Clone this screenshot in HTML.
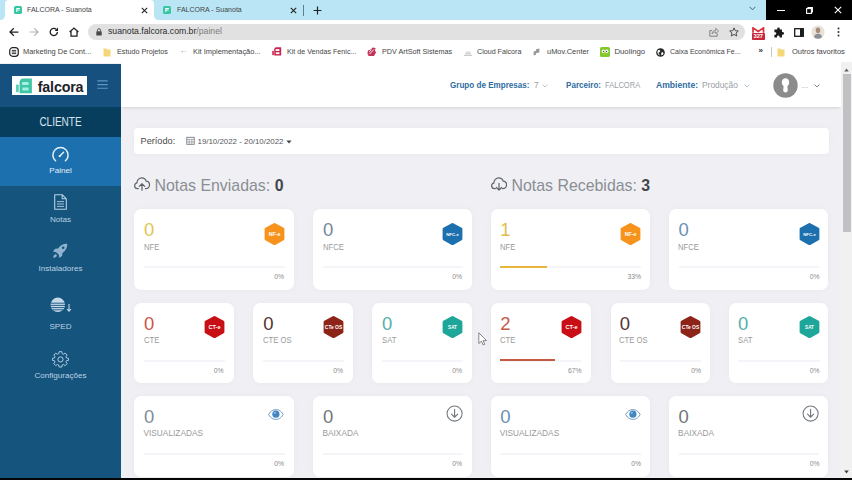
<!DOCTYPE html>
<html lang="pt-BR">
<head>
<meta charset="utf-8">
<title>FALCORA - Suanota</title>
<style>
*{box-sizing:border-box;margin:0;padding:0}
html,body{width:852px;height:480px;overflow:hidden;background:#fff;font-family:"Liberation Sans",sans-serif;}
.abs,.abs *{position:absolute}
#root{position:relative;width:852px;height:480px;overflow:hidden;background:#fff}
.t{position:absolute;white-space:nowrap;line-height:1}
/* browser chrome */
#tabbar{left:0;top:0;width:852px;height:20px;background:#b9e5f5}
#tab1{left:5px;top:0;width:148.5px;height:20px;background:#fff;border-radius:4px 4px 0 0}
#winctl{left:766px;top:0;width:86px;height:20px;background:#000}
#toolbar{left:0;top:20px;width:852px;height:23px;background:#fff}
#omni{left:87.5px;top:23.5px;width:657px;height:16.8px;border-radius:8.4px;background:#e1e1e1}
#bm{left:0;top:43px;width:852px;height:19px;background:#fff}
.bmt{font-size:7.6px;color:#3a3a3a;top:48px}
/* page */
#page{left:0;top:63px;width:852px;height:417px;background:#f0f0f4}
#side{left:0;top:63.5px;width:121px;height:417px;background:#14547d}
#sidehead{left:0;top:63.5px;width:121px;height:43.5px;background:#16507f}
#cliente{left:0;top:107px;width:121px;height:29.7px;background:#083e5d}
#active{left:0;top:136.7px;width:121px;height:49.3px;background:#1b70ad}
#hdr{left:121px;top:62px;width:720px;height:44.7px;background:#fff;box-shadow:0 2px 3px -1px rgba(0,0,0,.13)}
#scroll{left:841px;top:62px;width:11px;height:416px;background:#f1f1f1}
#thumb{left:842.7px;top:74px;width:8px;height:157.6px;background:#c1c0c2}
#bottom{left:0;top:478.4px;width:852px;height:1.6px;background:#050505}
.card{position:absolute;background:#fff;border-radius:7px;box-shadow:0 0 5px rgba(170,175,195,.12)}
.num{font-size:18.5px}
.lbl{font-size:8.3px;color:#9a9a9a}
.pct{font-size:6.8px;color:#8a8a8a}
.bar{position:absolute;height:2px;background:#f4f5f8;margin-top:-0.2px}
.hx{position:absolute}
.mi{font-size:8.1px;color:#bcd2e4;text-align:center;width:121px;left:0}
.hb{font-size:8.6px;font-weight:bold;color:#2f6c9f;top:81px}
.hv{font-size:8.4px;color:#9aa0a6;top:81.3px}
.ct{font-size:7.8px;color:#454545;transform-origin:0 50%}
.fav{position:absolute}
</style>
</head>
<body>
<div id="root" class="abs">
<!-- ===== browser chrome ===== -->
<div id="tabbar"></div>
<div id="tab1"></div>
<svg style="position:absolute;left:0;top:15px" width="5" height="5" viewBox="0 0 5 5"><path d="M0 5H5V0C5 3 3 5 0 5Z" fill="#fff"/></svg>
<svg style="position:absolute;left:153.5px;top:15px" width="5" height="5" viewBox="0 0 5 5"><path d="M5 5H0V0C0 3 2 5 5 5Z" fill="#fff"/></svg>
<div id="winctl"></div>
<div id="toolbar"></div>
<div id="omni"></div>
<div id="bm"></div>
<!-- CHROME-CONTENT -->
<!-- tab 1 -->
<svg class="fav" style="left:14px;top:5.8px" width="8" height="8" viewBox="0 0 8 8"><rect x="0" y="0" width="8" height="8" rx="1.6" fill="#35c7a2"/><path d="M2.3 2H6V3H3.3V3.6H5.6V4.5H3.3V6H2.3Z" fill="#fff"/></svg>
<div class="t ct" style="left:27.3px;top:5.7px;transform:scaleX(.9)">FALCORA - Suanota</div>
<svg class="fav" style="left:140.8px;top:6.6px" width="7" height="7" viewBox="0 0 7 7"><path d="M0.8 0.8L6.2 6.2M6.2 0.8L0.8 6.2" stroke="#222" stroke-width="1.1"/></svg>
<!-- tab 2 -->
<svg class="fav" style="left:162.5px;top:5.8px" width="8" height="8" viewBox="0 0 8 8"><rect x="0" y="0" width="8" height="8" rx="1.6" fill="#35c7a2"/><path d="M2.3 2H6V3H3.3V3.6H5.6V4.5H3.3V6H2.3Z" fill="#fff"/></svg>
<div class="t ct" style="left:176.5px;top:5.7px;transform:scaleX(.9)">FALCORA - Suanota</div>
<svg class="fav" style="left:290px;top:6.6px" width="7" height="7" viewBox="0 0 7 7"><path d="M0.8 0.8L6.2 6.2M6.2 0.8L0.8 6.2" stroke="#222" stroke-width="1.1"/></svg>
<div style="left:303px;top:4.5px;width:1px;height:11px;background:#5d7f8c"></div>
<svg class="fav" style="left:313px;top:5.5px" width="9" height="9" viewBox="0 0 9 9"><path d="M4.5 0.6V8.4M0.6 4.5H8.4" stroke="#222" stroke-width="1.2"/></svg>
<svg class="fav" style="left:748.5px;top:6px" width="7" height="5" viewBox="0 0 7 5"><path d="M0.6 0.8L3.5 3.8L6.4 0.8" fill="none" stroke="#456a78" stroke-width="1"/></svg>
<!-- window controls -->
<div style="left:777px;top:10px;width:7.5px;height:1.2px;background:#fff"></div>
<svg class="fav" style="left:805.5px;top:6.5px" width="7" height="7" viewBox="0 0 7 7"><rect x="0.6" y="1.6" width="4.8" height="4.8" fill="none" stroke="#fff" stroke-width="1.1"/><path d="M2 1.4V0.6H6.4V5H5.6" fill="none" stroke="#fff" stroke-width="1.1"/></svg>
<svg class="fav" style="left:834px;top:6.4px" width="8" height="8" viewBox="0 0 8 8"><path d="M0.8 0.8L7.2 7.2M7.2 0.8L0.8 7.2" stroke="#fff" stroke-width="1.1"/></svg>
<!-- toolbar -->
<svg class="fav" style="left:8.5px;top:26.5px" width="10" height="10" viewBox="0 0 10 10"><path d="M9.4 5H1.2M4.8 1.2L1 5L4.8 8.8" fill="none" stroke="#1f1f1f" stroke-width="1.25"/></svg>
<svg class="fav" style="left:29px;top:26.5px" width="10" height="10" viewBox="0 0 10 10"><path d="M0.6 5H8.8M5.2 1.2L9 5L5.2 8.8" fill="none" stroke="#b4b4b4" stroke-width="1.2"/></svg>
<svg class="fav" style="left:48.5px;top:26.5px" width="10" height="10" viewBox="0 0 10 10"><path d="M8.4 5A3.6 3.6 0 1 1 7.3 2.4" fill="none" stroke="#1f1f1f" stroke-width="1.3"/><path d="M9 0.6V3.9H5.7Z" fill="#1f1f1f"/></svg>
<svg class="fav" style="left:68.5px;top:26.5px" width="10" height="10" viewBox="0 0 10 10"><path d="M0.6 5L5 1L9.4 5M2 4.2V9H8V4.2" fill="none" stroke="#1f1f1f" stroke-width="1.25"/></svg>
<svg class="fav" style="left:95.5px;top:27.8px" width="6" height="8" viewBox="0 0 6 8"><rect x="0.3" y="3.2" width="5.4" height="4.4" rx="0.6" fill="#4a4a4a"/><path d="M1.5 3.4V2.2A1.5 1.5 0 0 1 4.5 2.2V3.4" fill="none" stroke="#4a4a4a" stroke-width="0.9"/></svg>
<div class="t" style="left:108px;top:27.4px;font-size:9px;color:#2a2a2a;transform-origin:0 50%;transform:scaleX(.965)">suanota.falcora.com.br<span style="position:static;color:#7d7d7d">/painel</span></div>
<svg class="fav" style="left:708.5px;top:27px" width="10" height="10" viewBox="0 0 10 10"><path d="M3.2 3.6H0.8V9.2H8.2V6.6" fill="none" stroke="#777" stroke-width="0.9"/><path d="M3 7C3.2 4.8 4.6 3.4 6.8 3.2V1.4L9.6 4L6.8 6.6V4.9C5.2 5 4 5.6 3 7Z" fill="none" stroke="#777" stroke-width="0.8" stroke-linejoin="round"/></svg>
<svg class="fav" style="left:728.5px;top:26.8px" width="10" height="10" viewBox="0 0 10 10"><path d="M5 0.9L6.25 3.7L9.3 4L7 6L7.7 9L5 7.4L2.3 9L3 6L0.7 4L3.75 3.7Z" fill="none" stroke="#444" stroke-width="0.95" stroke-linejoin="round"/></svg>
<!-- extensions -->
<svg class="fav" style="left:752px;top:27.3px" width="12.5" height="6" viewBox="0 0 12.5 6"><path d="M1 5.8V0.9L6.25 4.4L11.5 0.9V5.8" fill="none" stroke="#d8303d" stroke-width="1.7" stroke-linejoin="miter"/></svg>
<div style="left:752px;top:33.2px;width:12.5px;height:6.6px;background:#c8283a;border-radius:0.8px"></div>
<div class="t" style="left:752px;top:33.7px;width:12.5px;text-align:center;font-size:5.8px;font-weight:bold;color:#fff">327</div>
<svg class="fav" style="left:772.5px;top:26.5px" width="11" height="11" viewBox="0 0 11 11"><path d="M4.2 1.8A1.3 1.3 0 0 1 6.8 1.8V2.6H9V5H9.6A1.4 1.4 0 0 1 9.6 7.8H9V10.4H6.6V9.8A1.3 1.3 0 0 0 4 9.8V10.4H1.4V7.8H2A1.3 1.3 0 0 0 2 5.2H1.4V2.6H4.2Z" fill="#1c1c1c"/></svg>
<svg class="fav" style="left:793.5px;top:27.5px" width="10" height="9" viewBox="0 0 10 9"><rect x="0.7" y="0.7" width="8.6" height="7.6" fill="none" stroke="#1c1c1c" stroke-width="1.3"/><rect x="6" y="0.7" width="3.3" height="7.6" fill="#1c1c1c"/></svg>
<svg class="fav" style="left:811px;top:25px" width="14" height="14" viewBox="0 0 14 14"><circle cx="7" cy="7" r="6.6" fill="#e9e2d9"/><path d="M7 2.6C5.4 2.6 4.6 3.9 4.7 5.4C4.8 6.9 5.6 8.2 7 8.2C8.4 8.2 9.2 6.9 9.3 5.4C9.4 3.9 8.6 2.6 7 2.6Z" fill="#a58f7c"/><path d="M3 12.2C3.4 9.8 5 8.8 7 8.8C9 8.8 10.6 9.8 11 12.2A6.6 6.6 0 0 1 3 12.2Z" fill="#8b8e94"/></svg>
<svg class="fav" style="left:836.5px;top:27px" width="3" height="10" viewBox="0 0 3 10"><circle cx="1.5" cy="1.5" r="1" fill="#333"/><circle cx="1.5" cy="5" r="1" fill="#333"/><circle cx="1.5" cy="8.5" r="1" fill="#333"/></svg>
<!-- bookmarks -->
<svg class="fav" style="left:8.5px;top:47px" width="10" height="10" viewBox="0 0 10 10"><rect x="0.7" y="0.7" width="8.6" height="8.6" rx="3" fill="none" stroke="#222" stroke-width="1.2"/><path d="M2.8 3.4H7.2M2.8 5H7.2M2.8 6.6H7.2" stroke="#222" stroke-width="0.9"/></svg>
<div class="t ct" style="left:23.4px;top:48px;transform:scaleX(.955)">Marketing De Cont...</div>
<svg class="fav" style="left:103px;top:47.5px" width="8" height="9" viewBox="0 0 8 9"><path d="M0.5 0.5H3.2L4 1.5H7.5V8.5H0.5Z" fill="#f4d778"/></svg>
<div class="t ct" style="left:117.3px;top:48px;transform:scaleX(.925)">Estudo Projetos</div>
<div class="t" style="left:179.5px;top:47px;font-size:8px;color:#999">←</div>
<div class="t ct" style="left:193.3px;top:48px;transform:scaleX(.95)">Kit Implementação...</div>
<svg class="fav" style="left:272px;top:47.2px" width="10" height="9" viewBox="0 0 17 16"><rect x="0.1" y="6.5" width="2.8" height="8" rx="0.8" fill="#c9244e"/><path d="M3.6 4.2C3.6 2.2 5.2 0.6 7.2 0.6H15.9V15.2H3.6Z" fill="#c9244e"/><rect x="6" y="3.8" width="6.8" height="3.2" fill="#fff"/><rect x="6.4" y="9.4" width="6.4" height="3.2" fill="#fff"/></svg>
<div class="t ct" style="left:286.7px;top:48px;transform:scaleX(.915)">Kit de Vendas Fenic...</div>
<svg class="fav" style="left:366.5px;top:47.3px" width="9.5" height="9.5" viewBox="0 0 9.5 9.5"><path d="M1 3.6L3.8 2.6L5.6 0.6L8.6 1L8 3.6L9 5.4L7 9H1.6L0.4 6.4Z" fill="#c43358"/><path d="M2.4 7.2L7 2.4M2.2 4.8L4.4 2.8" stroke="#fff" stroke-width="0.9"/></svg>
<div class="t ct" style="left:381.7px;top:48px;transform:scaleX(.925)">PDV ArtSoft Sistemas</div>
<svg class="fav" style="left:462.5px;top:49.5px" width="10" height="6" viewBox="0 0 10 6"><path d="M1 5.4H9M2 3.8H8M3 2.2H7.4" stroke="#b5b5b5" stroke-width="0.8"/></svg>
<div class="t ct" style="left:477.3px;top:48px;transform:scaleX(.915)">Cloud Falcora</div>
<svg class="fav" style="left:533px;top:48px" width="7" height="8" viewBox="0 0 7 8"><path d="M0.6 7.4V3.4L3 2.8V1.2L6.4 0.6V4.6L3 5.2V6.8Z" fill="#9a9a9a"/></svg>
<div class="t ct" style="left:547.3px;top:48px;transform:scaleX(.955)">uMov.Center</div>
<svg class="fav" style="left:599.5px;top:47px" width="10" height="10" viewBox="0 0 10 10"><rect x="0" y="0" width="10" height="10" rx="1.6" fill="#82c92d"/><ellipse cx="3.4" cy="4.2" rx="1.6" ry="1.8" fill="#fff"/><ellipse cx="6.8" cy="4.2" rx="1.6" ry="1.8" fill="#fff"/><circle cx="3.6" cy="4.4" r="0.7" fill="#4b4b4b"/><circle cx="6.6" cy="4.4" r="0.7" fill="#4b4b4b"/><path d="M4.2 6.2H6L5.1 7.4Z" fill="#f5b400"/></svg>
<div class="t ct" style="left:614.4px;top:48px;transform:scaleX(1)">Duolingo</div>
<svg class="fav" style="left:655.5px;top:47.5px" width="9" height="9" viewBox="0 0 9 9"><circle cx="4.5" cy="4.5" r="4.3" fill="#2a2a2a"/><path d="M2 2.4C3 1.6 4.4 2.2 4.2 3.2C4 4.2 2.4 4 2.6 5.2C2.8 6 3.8 6 3.6 7.4C2.2 6.8 1.2 5.4 1.4 3.6Z M5.6 4.4C6.6 4 7.6 4.6 7.4 5.6C7.2 6.6 6.2 7.4 5.6 7.2C5.2 6.4 5 5.2 5.6 4.4Z" fill="#fff"/></svg>
<div class="t ct" style="left:670px;top:48px;transform:scaleX(.9)">Caixa Econômica Fe...</div>
<div class="t" style="left:758.5px;top:47.4px;font-size:8px;font-weight:bold;color:#333">»</div>
<div style="left:770.5px;top:47px;width:1px;height:10px;background:#c9c9c9"></div>
<svg class="fav" style="left:777px;top:47.5px" width="8" height="9" viewBox="0 0 8 9"><path d="M0.5 0.5H3.2L4 1.5H7.5V8.5H0.5Z" fill="#f4d778"/></svg>
<div class="t ct" style="left:792px;top:48px;transform:scaleX(.96)">Outros favoritos</div>

<!-- ===== page ===== -->
<div id="page"></div>
<div id="hdr"></div>
<div id="side"></div>
<div id="sidehead"></div>
<div id="cliente"></div>
<div id="active"></div>
<!-- SIDE-CONTENT -->
<div style="left:12.2px;top:76.2px;width:75.2px;height:19.3px;background:#fff"></div>
<svg style="position:absolute;left:16px;top:77.5px" width="17" height="17" viewBox="0 0 17 17"><rect x="0.1" y="6.5" width="2.6" height="7.8" rx="0.8" fill="#4fcdb0"/><path d="M3.6 4.2C3.6 2.2 5.2 0.6 7.2 0.6H15.9V15.2H3.6Z" fill="#3ec6a6"/><rect x="6" y="4" width="6.6" height="3" rx="0.6" fill="#a9eee2"/><rect x="6.4" y="9.5" width="6.2" height="3" rx="0.6" fill="#a9eee2"/></svg>
<div class="t" style="left:37.8px;top:79.5px;font-size:14.3px;font-weight:bold;color:#22222a;letter-spacing:-0.2px">falcora</div>
<svg style="position:absolute;left:97.3px;top:80px" width="11" height="9" viewBox="0 0 11 9"><path d="M0.3 0.9H10.7M0.3 4.6H10.7M0.3 8.3H10.7" stroke="#5a98c8" stroke-width="1.1"/></svg>
<div class="t" style="left:0;width:121px;text-align:center;top:115.6px;font-size:12.2px;color:#d6e4ef;transform:scaleX(.82)">CLIENTE</div>

<svg style="position:absolute;left:51.5px;top:145.5px" width="17" height="17" viewBox="0 0 17 17"><path d="M3.6 14.8C1.9 13.5 0.9 11.4 0.9 9.1C0.9 4.9 4.3 1.5 8.5 1.5C12.7 1.5 16.1 4.9 16.1 9.1C16.1 11.4 15.1 13.5 13.4 14.8" fill="none" stroke="#e6f1fa" stroke-width="1.4" stroke-linecap="round"/><path d="M7.6 10.2L11.6 6.2" stroke="#e6f1fa" stroke-width="1.5" stroke-linecap="round"/><circle cx="7.7" cy="10.1" r="1.1" fill="#e6f1fa"/></svg>
<div class="t mi" style="top:166.6px;color:#e3eef8">Painel</div>

<svg style="position:absolute;left:53.5px;top:193.5px" width="13" height="16" viewBox="0 0 13 16"><path d="M0.7 0.7H8.2L12.3 4.8V15.3H0.7Z M8.2 0.7V4.8H12.3" fill="none" stroke="#b8cfe2" stroke-width="1.1" stroke-linejoin="round"/><path d="M3 7.6H10M3 10H10M3 12.4H10" stroke="#b8cfe2" stroke-width="0.9"/></svg>
<div class="t mi" style="top:215.8px">Notas</div>

<svg style="position:absolute;left:52px;top:243px" width="16" height="16" viewBox="0 0 16 16"><path d="M15.2 0.8C11.4 0.6 8.2 2.2 6 5.6L3.2 5.8L0.9 8.6L4.2 9.2L6.8 11.8L7.4 15.1L10.2 12.8L10.4 10C13.8 7.8 15.4 4.6 15.2 0.8Z" fill="#8fb2cf"/><path d="M1.2 14.8C1.4 12.6 2.2 11.4 3.6 11.2C4.8 11.4 5 12.4 4.6 13.2C4 14.2 2.8 14.6 1.2 14.8Z" fill="#8fb2cf"/><circle cx="11.2" cy="4.8" r="1.3" fill="#14547d"/></svg>
<div class="t mi" style="top:264.6px">Instaladores</div>

<svg style="position:absolute;left:50px;top:297px" width="22" height="16" viewBox="0 0 22 16"><circle cx="7.8" cy="7.8" r="7.2" fill="#c4d8e8"/><path d="M0.8 6.2H14.8M0.6 8.4H15M1.2 10.6H14.4M2.6 12.8H13" stroke="#14547d" stroke-width="0.9"/><path d="M19 7V14M17 12L19 14.2L21 12" fill="none" stroke="#c4d8e8" stroke-width="1.1"/></svg>
<div class="t mi" style="top:323px">SPED</div>

<svg style="position:absolute;left:51.5px;top:350.5px" width="17" height="17" viewBox="0 0 17 17"><path d="M7.1 1H9.9L10.3 3.1L11.6 3.7L13.4 2.5L15.4 4.5L14.2 6.3L14.8 7.6L16.9 8V10L14.8 10.4L14.2 11.7L15.4 13.5L13.4 15.5L11.6 14.3L10.3 14.9L9.9 17H7.1L6.7 14.9L5.4 14.3L3.6 15.5L1.6 13.5L2.8 11.7L2.2 10.4L0.1 10V8L2.2 7.6L2.8 6.3L1.6 4.5L3.6 2.5L5.4 3.7L6.7 3.1Z" transform="translate(0.3 -0.3) scale(0.96)" fill="none" stroke="#b8cfe2" stroke-width="1" stroke-linejoin="round"/><circle cx="8.5" cy="8.4" r="2.6" fill="none" stroke="#b8cfe2" stroke-width="1"/></svg>
<div class="t mi" style="top:372px">Configurações</div>

<!-- HEADER-CONTENT -->
<div class="t hb" style="left:449.5px;transform-origin:0 50%;transform:scaleX(.94)">Grupo de Empresas:</div>
<div class="t hv" style="left:534px">7</div>
<svg style="position:absolute;left:541.5px;top:84px" width="6" height="4" viewBox="0 0 6 4"><path d="M0.6 0.6L3 3L5.4 0.6" fill="none" stroke="#b9bdc2" stroke-width="0.9"/></svg>
<div class="t hb" style="left:565.7px;transform-origin:0 50%;transform:scaleX(.94)">Parceiro:</div>
<div class="t hv" style="left:605.3px;transform-origin:0 50%;transform:scaleX(.9)">FALCORA</div>
<div class="t hb" style="left:656px">Ambiente:</div>
<div class="t hv" style="left:702px">Produção</div>
<svg style="position:absolute;left:743.5px;top:84px" width="6" height="4" viewBox="0 0 6 4"><path d="M0.6 0.6L3 3L5.4 0.6" fill="none" stroke="#b9bdc2" stroke-width="0.9"/></svg>
<svg style="position:absolute;left:772.5px;top:73px" width="25" height="25" viewBox="0 0 25 25"><circle cx="12.5" cy="12.5" r="12.2" fill="#8b8b8b"/><path d="M12.5 5.2C10.2 5.2 8.8 6.9 8.8 9.2C8.8 10.9 9.5 12.3 10.6 13L10.2 17.6C10.2 18.6 11.2 19.4 12.5 19.4C13.8 19.4 14.8 18.6 14.8 17.6L14.4 13C15.5 12.3 16.2 10.9 16.2 9.2C16.2 6.9 14.8 5.2 12.5 5.2Z" fill="#fff"/></svg>
<div class="t" style="left:801.5px;top:81.5px;font-size:8px;color:#9aa0a6">...</div>
<svg style="position:absolute;left:813.5px;top:83.5px" width="6" height="4" viewBox="0 0 6 4"><path d="M0.6 0.6L3 3L5.4 0.6" fill="none" stroke="#80868c" stroke-width="1"/></svg>

<!-- MAIN-CONTENT -->
<div class="card" style="left:134px;top:128px;width:694.5px;height:25.5px;border-radius:4px"></div>
<div class="t" style="left:140.5px;top:136.5px;font-size:9.2px;color:#4a4a4a">Período:</div>
<svg style="position:absolute;left:185.5px;top:136.2px" width="9" height="9" viewBox="0 0 9 9"><rect x="0.8" y="1.3" width="7.4" height="7" fill="none" stroke="#7a7f86" stroke-width="0.9"/><path d="M0.8 3.4H8.2M3.2 3.4V8.3M5.8 3.4V8.3M0.8 5.9H8.2" stroke="#7a7f86" stroke-width="0.6" fill="none"/></svg>
<div class="t" style="left:197.5px;top:137.5px;font-size:7.9px;color:#55595e">19/10/2022 - 20/10/2022</div>
<svg style="position:absolute;left:285.5px;top:139.5px" width="6" height="4" viewBox="0 0 6 4"><path d="M0.4 0.4H5.6L3 3.4Z" fill="#444"/></svg>

<svg style="position:absolute;left:133.7px;top:177.2px" width="16.2" height="14.3" viewBox="0 0 17 15"><path d="M4.6 12.2H3.9C2 12.2 0.7 10.8 0.7 9.1C0.7 7.6 1.7 6.4 3.1 6.1C3.1 3.2 5.3 1 8.1 1C10.3 1 12.2 2.4 12.8 4.4C14.8 4.6 16.3 6.2 16.3 8.2C16.3 10.4 14.6 12.2 12.4 12.2H12" fill="none" stroke="#5d6268" stroke-width="1.25" stroke-linecap="round"/><path d="M8.4 14V7.2M5.6 9.8L8.4 7L11.2 9.8" fill="none" stroke="#5d6268" stroke-width="1.25" stroke-linecap="round" stroke-linejoin="round"/></svg>
<div class="t" style="left:154.5px;top:177.5px;font-size:15.9px;color:#8a8e93">Notas Enviadas: <b style="position:static;color:#44474c">0</b></div>

<svg style="position:absolute;left:490.7px;top:177.2px" width="16.2" height="14.3" viewBox="0 0 17 15"><path d="M4.6 12.2H3.9C2 12.2 0.7 10.8 0.7 9.1C0.7 7.6 1.7 6.4 3.1 6.1C3.1 3.2 5.3 1 8.1 1C10.3 1 12.2 2.4 12.8 4.4C14.8 4.6 16.3 6.2 16.3 8.2C16.3 10.4 14.6 12.2 12.4 12.2H12" fill="none" stroke="#5d6268" stroke-width="1.25" stroke-linecap="round"/><path d="M8.4 6.6V13.6M5.6 11L8.4 13.8L11.2 11" fill="none" stroke="#5d6268" stroke-width="1.25" stroke-linecap="round" stroke-linejoin="round"/></svg>
<div class="t" style="left:511.5px;top:177.5px;font-size:15.9px;color:#8a8e93">Notas Recebidas: <b style="position:static;color:#44474c">3</b></div>
<!-- MAIN-CARDS-START -->
<div class="card" style="left:134px;top:209px;width:160px;height:80.5px"></div>
<div class="t num" style="left:144px;top:221px;color:#dfc656">0</div>
<div class="t lbl" style="left:143.5px;top:242.9px;transform-origin:0 50%;transform:scaleX(.93)">NFE</div>
<div class="bar" style="left:144px;top:266.5px;width:141px"></div>
<div class="t pct" style="right:568.0px;top:274px">0%</div>
<svg class="hx" style="left:264px;top:222.6px;width:21px;height:22.2px" width="21" height="22.2" viewBox="0 0 21 23" preserveAspectRatio="none"><polygon points="10.5,1.6 18.9,6.3 18.9,16.7 10.5,21.4 2.1,16.7 2.1,6.3" fill="#f7931c" stroke="#f7931c" stroke-width="3" stroke-linejoin="round"/><text x="10.5" y="13.41" text-anchor="middle" font-family="Liberation Sans, sans-serif" font-weight="bold" font-size="5.3" fill="#fff">NF-e</text></svg>
<div class="card" style="left:313px;top:209px;width:159px;height:80.5px"></div>
<div class="t num" style="left:323px;top:221px;color:#73899e">0</div>
<div class="t lbl" style="left:322.5px;top:242.9px;transform-origin:0 50%;transform:scaleX(.93)">NFCE</div>
<div class="bar" style="left:323px;top:266.5px;width:140px"></div>
<div class="t pct" style="right:390.0px;top:274px">0%</div>
<svg class="hx" style="left:442px;top:222.6px;width:21px;height:22.2px" width="21" height="22.2" viewBox="0 0 21 23" preserveAspectRatio="none"><polygon points="10.5,1.6 18.9,6.3 18.9,16.7 10.5,21.4 2.1,16.7 2.1,6.3" fill="#1c70ad" stroke="#1c70ad" stroke-width="3" stroke-linejoin="round"/><text x="10.5" y="13.05" text-anchor="middle" font-family="Liberation Sans, sans-serif" font-weight="bold" font-size="4.3" fill="#fff">NFC-e</text></svg>
<div class="card" style="left:491px;top:209px;width:159px;height:80.5px"></div>
<div class="t num" style="left:500.2px;top:221px;color:#e0bb4a">1</div>
<div class="t lbl" style="left:499.7px;top:242.9px;transform-origin:0 50%;transform:scaleX(.93)">NFE</div>
<div class="bar" style="left:500.2px;top:266.5px;width:140.8px"></div>
<div class="bar" style="left:500.2px;top:266px;width:46.8px;height:2px;background:#e6b73a"></div>
<div class="t pct" style="right:211.0px;top:274px">33%</div>
<svg class="hx" style="left:620px;top:222.6px;width:21px;height:22.2px" width="21" height="22.2" viewBox="0 0 21 23" preserveAspectRatio="none"><polygon points="10.5,1.6 18.9,6.3 18.9,16.7 10.5,21.4 2.1,16.7 2.1,6.3" fill="#f7931c" stroke="#f7931c" stroke-width="3" stroke-linejoin="round"/><text x="10.5" y="13.41" text-anchor="middle" font-family="Liberation Sans, sans-serif" font-weight="bold" font-size="5.3" fill="#fff">NF-e</text></svg>
<div class="card" style="left:669.4px;top:209px;width:159.10000000000002px;height:80.5px"></div>
<div class="t num" style="left:678.6px;top:221px;color:#6a90b4">0</div>
<div class="t lbl" style="left:678.1px;top:242.9px;transform-origin:0 50%;transform:scaleX(.93)">NFCE</div>
<div class="bar" style="left:678.6px;top:266.5px;width:140.90000000000003px"></div>
<div class="t pct" style="right:32.5px;top:274px">0%</div>
<svg class="hx" style="left:798.5px;top:222.6px;width:21px;height:22.2px" width="21" height="22.2" viewBox="0 0 21 23" preserveAspectRatio="none"><polygon points="10.5,1.6 18.9,6.3 18.9,16.7 10.5,21.4 2.1,16.7 2.1,6.3" fill="#1c70ad" stroke="#1c70ad" stroke-width="3" stroke-linejoin="round"/><text x="10.5" y="13.05" text-anchor="middle" font-family="Liberation Sans, sans-serif" font-weight="bold" font-size="4.3" fill="#fff">NFC-e</text></svg>
<div class="card" style="left:134px;top:302.5px;width:99.5px;height:80.5px"></div>
<div class="t num" style="left:144px;top:314.5px;color:#cf5445">0</div>
<div class="t lbl" style="left:143.5px;top:336.0px;transform-origin:0 50%;transform:scaleX(.93)">CTE</div>
<div class="bar" style="left:144px;top:360.0px;width:80.5px"></div>
<div class="t pct" style="right:628.5px;top:367.5px">0%</div>
<svg class="hx" style="left:203.7px;top:315.9px;width:21px;height:22.2px" width="21" height="22.2" viewBox="0 0 21 23" preserveAspectRatio="none"><polygon points="10.5,1.6 18.9,6.3 18.9,16.7 10.5,21.4 2.1,16.7 2.1,6.3" fill="#c90f16" stroke="#c90f16" stroke-width="3" stroke-linejoin="round"/><text x="10.5" y="13.52" text-anchor="middle" font-family="Liberation Sans, sans-serif" font-weight="bold" font-size="5.6" fill="#fff">CT-e</text></svg>
<div class="card" style="left:253.2px;top:302.5px;width:99.80000000000001px;height:80.5px"></div>
<div class="t num" style="left:263.2px;top:314.5px;color:#553232">0</div>
<div class="t lbl" style="left:262.7px;top:336.0px;transform-origin:0 50%;transform:scaleX(.93)">CTE OS</div>
<div class="bar" style="left:263.2px;top:360.0px;width:80.80000000000001px"></div>
<div class="t pct" style="right:509.0px;top:367.5px">0%</div>
<svg class="hx" style="left:323.2px;top:315.9px;width:21px;height:22.2px" width="21" height="22.2" viewBox="0 0 21 23" preserveAspectRatio="none"><polygon points="10.5,1.6 18.9,6.3 18.9,16.7 10.5,21.4 2.1,16.7 2.1,6.3" fill="#8c2417" stroke="#8c2417" stroke-width="3" stroke-linejoin="round"/><text x="10.5" y="13.26" text-anchor="middle" font-family="Liberation Sans, sans-serif" font-weight="bold" font-size="4.9" fill="#fff">CTe OS</text></svg>
<div class="card" style="left:372px;top:302.5px;width:100px;height:80.5px"></div>
<div class="t num" style="left:382px;top:314.5px;color:#55b0a8">0</div>
<div class="t lbl" style="left:381.5px;top:336.0px;transform-origin:0 50%;transform:scaleX(.93)">SAT</div>
<div class="bar" style="left:382px;top:360.0px;width:81px"></div>
<div class="t pct" style="right:390.0px;top:367.5px">0%</div>
<svg class="hx" style="left:442.2px;top:315.9px;width:21px;height:22.2px" width="21" height="22.2" viewBox="0 0 21 23" preserveAspectRatio="none"><polygon points="10.5,1.6 18.9,6.3 18.9,16.7 10.5,21.4 2.1,16.7 2.1,6.3" fill="#1da699" stroke="#1da699" stroke-width="3" stroke-linejoin="round"/><text x="10.5" y="13.16" text-anchor="middle" font-family="Liberation Sans, sans-serif" font-weight="bold" font-size="4.6" fill="#fff">SAT</text></svg>
<div class="card" style="left:491px;top:302.5px;width:99.5px;height:80.5px"></div>
<div class="t num" style="left:500.2px;top:314.5px;color:#c65a47">2</div>
<div class="t lbl" style="left:499.7px;top:336.0px;transform-origin:0 50%;transform:scaleX(.93)">CTE</div>
<div class="bar" style="left:500.2px;top:360.0px;width:81.3px"></div>
<div class="bar" style="left:500.2px;top:359.5px;width:54.8px;height:2px;background:#c35a41"></div>
<div class="t pct" style="right:270.5px;top:367.5px">67%</div>
<svg class="hx" style="left:560.7px;top:315.9px;width:21px;height:22.2px" width="21" height="22.2" viewBox="0 0 21 23" preserveAspectRatio="none"><polygon points="10.5,1.6 18.9,6.3 18.9,16.7 10.5,21.4 2.1,16.7 2.1,6.3" fill="#c90f16" stroke="#c90f16" stroke-width="3" stroke-linejoin="round"/><text x="10.5" y="13.52" text-anchor="middle" font-family="Liberation Sans, sans-serif" font-weight="bold" font-size="5.6" fill="#fff">CT-e</text></svg>
<div class="card" style="left:610.5px;top:302.5px;width:99.5px;height:80.5px"></div>
<div class="t num" style="left:619.7px;top:314.5px;color:#553232">0</div>
<div class="t lbl" style="left:619.2px;top:336.0px;transform-origin:0 50%;transform:scaleX(.93)">CTE OS</div>
<div class="bar" style="left:619.7px;top:360.0px;width:81.3px"></div>
<div class="t pct" style="right:151.0px;top:367.5px">0%</div>
<svg class="hx" style="left:680.2px;top:315.9px;width:21px;height:22.2px" width="21" height="22.2" viewBox="0 0 21 23" preserveAspectRatio="none"><polygon points="10.5,1.6 18.9,6.3 18.9,16.7 10.5,21.4 2.1,16.7 2.1,6.3" fill="#8c2417" stroke="#8c2417" stroke-width="3" stroke-linejoin="round"/><text x="10.5" y="13.26" text-anchor="middle" font-family="Liberation Sans, sans-serif" font-weight="bold" font-size="4.9" fill="#fff">CTe OS</text></svg>
<div class="card" style="left:728.8px;top:302.5px;width:99.70000000000005px;height:80.5px"></div>
<div class="t num" style="left:738.0px;top:314.5px;color:#55b0a8">0</div>
<div class="t lbl" style="left:737.5px;top:336.0px;transform-origin:0 50%;transform:scaleX(.93)">SAT</div>
<div class="bar" style="left:738.0px;top:360.0px;width:81.50000000000004px"></div>
<div class="t pct" style="right:32.5px;top:367.5px">0%</div>
<svg class="hx" style="left:798.7px;top:315.9px;width:21px;height:22.2px" width="21" height="22.2" viewBox="0 0 21 23" preserveAspectRatio="none"><polygon points="10.5,1.6 18.9,6.3 18.9,16.7 10.5,21.4 2.1,16.7 2.1,6.3" fill="#1da699" stroke="#1da699" stroke-width="3" stroke-linejoin="round"/><text x="10.5" y="13.16" text-anchor="middle" font-family="Liberation Sans, sans-serif" font-weight="bold" font-size="4.6" fill="#fff">SAT</text></svg>
<div class="card" style="left:134px;top:396px;width:160px;height:80.5px"></div>
<div class="t num" style="left:144px;top:408px;color:#7f8d9b">0</div>
<div class="t lbl" style="left:143.5px;top:428.9px">VISUALIZADAS</div>
<div class="bar" style="left:144px;top:453.5px;width:141px"></div>
<div class="t pct" style="right:568.0px;top:461px">0%</div>
<svg style="position:absolute;left:268.1px;top:408.8px" width="15.8" height="11" viewBox="0 0 17 12"><path d="M0.6 6 C3 1.6 6 0.7 8.5 0.7 C11 0.7 14 1.6 16.4 6 C14 10.4 11 11.3 8.5 11.3 C6 11.3 3 10.4 0.6 6 Z" fill="none" stroke="#6a94ba" stroke-width="1.05"/><circle cx="8.5" cy="5.6" r="3.9" fill="#3f86c2"/><circle cx="7.3" cy="4.2" r="1.2" fill="#8fbce0"/></svg>
<div class="card" style="left:313px;top:396px;width:159px;height:80.5px"></div>
<div class="t num" style="left:323px;top:408px;color:#72767c">0</div>
<div class="t lbl" style="left:322.5px;top:428.9px">BAIXADA</div>
<div class="bar" style="left:323px;top:453.5px;width:140px"></div>
<div class="t pct" style="right:390.0px;top:461px">0%</div>
<svg style="position:absolute;left:445.8px;top:404.8px" width="17.2" height="17.2" viewBox="0 0 18 18"><circle cx="9" cy="9" r="7.9" fill="none" stroke="#74797f" stroke-width="1.1"/><path d="M9 4.6 V12.6 M5.8 9.6 L9 12.8 L12.2 9.6" fill="none" stroke="#74797f" stroke-width="1.2" stroke-linecap="round" stroke-linejoin="round"/></svg>
<div class="card" style="left:491px;top:396px;width:159px;height:80.5px"></div>
<div class="t num" style="left:500.2px;top:408px;color:#6a90b4">0</div>
<div class="t lbl" style="left:499.7px;top:428.9px">VISUALIZADAS</div>
<div class="bar" style="left:500.2px;top:453.5px;width:140.8px"></div>
<div class="t pct" style="right:211.0px;top:461px">0%</div>
<svg style="position:absolute;left:624.9px;top:408.8px" width="15.8" height="11" viewBox="0 0 17 12"><path d="M0.6 6 C3 1.6 6 0.7 8.5 0.7 C11 0.7 14 1.6 16.4 6 C14 10.4 11 11.3 8.5 11.3 C6 11.3 3 10.4 0.6 6 Z" fill="none" stroke="#6a94ba" stroke-width="1.05"/><circle cx="8.5" cy="5.6" r="3.9" fill="#3f86c2"/><circle cx="7.3" cy="4.2" r="1.2" fill="#8fbce0"/></svg>
<div class="card" style="left:669.4px;top:396px;width:159.10000000000002px;height:80.5px"></div>
<div class="t num" style="left:678.6px;top:408px;color:#72767c">0</div>
<div class="t lbl" style="left:678.1px;top:428.9px">BAIXADA</div>
<div class="bar" style="left:678.6px;top:453.5px;width:140.90000000000003px"></div>
<div class="t pct" style="right:32.5px;top:461px">0%</div>
<svg style="position:absolute;left:802.3px;top:404.8px" width="17.2" height="17.2" viewBox="0 0 18 18"><circle cx="9" cy="9" r="7.9" fill="none" stroke="#74797f" stroke-width="1.1"/><path d="M9 4.6 V12.6 M5.8 9.6 L9 12.8 L12.2 9.6" fill="none" stroke="#74797f" stroke-width="1.2" stroke-linecap="round" stroke-linejoin="round"/></svg>
<!-- MAIN-CARDS-END -->

<svg style="position:absolute;left:478px;top:331.5px" width="10" height="14" viewBox="0 0 10 14"><path d="M0.8 0.8V11.6L3.4 9.2L5.2 13L6.8 12.3L5.1 8.6H8.6Z" fill="#fff" stroke="#6a6a6a" stroke-width="0.8" stroke-linejoin="round"/></svg>
<div id="scroll"></div>
<div id="thumb"></div>
<!-- SCROLL-CONTENT -->
<svg style="position:absolute;left:844px;top:67.5px" width="5" height="4" viewBox="0 0 5 4"><path d="M0.2 3.6L2.5 0.4L4.8 3.6Z" fill="#606060"/></svg>
<svg style="position:absolute;left:844px;top:470px" width="5" height="4" viewBox="0 0 5 4"><path d="M0.2 0.4L2.5 3.6L4.8 0.4Z" fill="#404040"/></svg>
<div id="bottom"></div>
</div>
</body>
</html>
